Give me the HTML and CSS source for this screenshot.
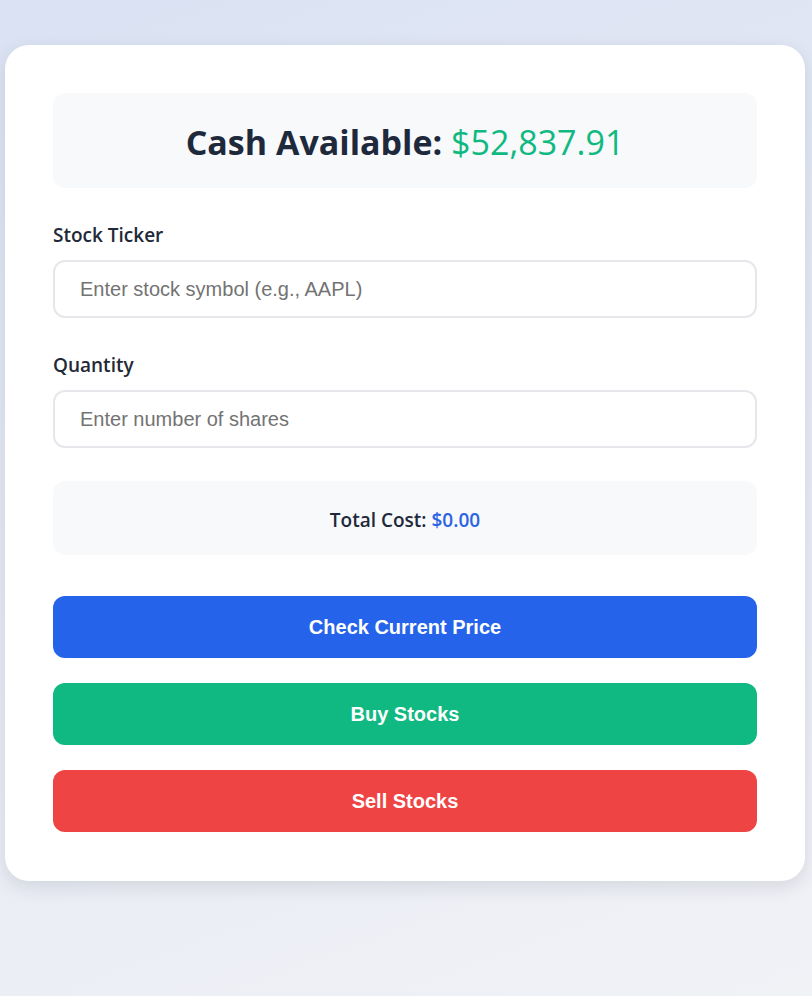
FILE: index.html
```html
<!DOCTYPE html>
<html>
<head>
<meta charset="utf-8">
<link rel="stylesheet" href="styles.css">
</head>
<body>
<div class="page">
  <div class="card">
    <div class="cash-box">
      <h2 class="cash-title">Cash Available: <span class="cash-amount">$52,837.91</span></h2>
    </div>
    <div class="field">
      <label class="label">Stock Ticker</label>
      <input class="input" type="text" placeholder="Enter stock symbol (e.g., AAPL)">
    </div>
    <div class="field">
      <label class="label">Quantity</label>
      <input class="input" type="text" placeholder="Enter number of shares">
    </div>
    <div class="total-box">Total Cost: <span class="total-amount">$0.00</span></div>
    <div class="actions">
      <button class="btn btn-blue">Check Current Price</button>
      <button class="btn btn-green">Buy Stocks</button>
      <button class="btn btn-red">Sell Stocks</button>
    </div>
  </div>
</div>
</body>
</html>
```
FILE: styles.css
```css
html, body {
  margin: 0;
  padding: 0;
}
body {
  font-family: "Open Sans", "Noto Sans", sans-serif;
  background: #fff;
}
.page {
  min-height: 996px;
  box-sizing: border-box;
  padding: 45px 7px 0 5px;
  background: linear-gradient(160deg, #dae2f3 0%, #e6eaf4 50%, #f1f2f6 100%);
}
.card {
  width: 800px;
  box-sizing: border-box;
  background: #fff;
  border-radius: 24px;
  padding: 48px 48px 49px;
  box-shadow: 0 6px 18px rgba(30, 41, 59, 0.12);
}
.cash-box {
  background: #f8f9fb;
  border-radius: 12px;
  height: 95px;
  display: flex;
  align-items: center;
  justify-content: center;
}
.cash-title {
  margin: 0;
  padding-top: 3px;
  font-size: 34px;
  font-weight: 700;
  color: #1e293b;
}
.cash-amount {
  font-weight: 400;
  color: #10b981;
}
.field {
  margin-top: 34px;
}
.field + .field {
  margin-top: 34px;
}
.label {
  display: block;
  font-size: 19px;
  font-weight: 600;
  color: #1f2937;
  line-height: 26px;
  margin-bottom: 12px;
}
.input {
  display: block;
  width: 100%;
  box-sizing: border-box;
  height: 58px;
  border: 2px solid #e5e7eb;
  border-radius: 12px;
  padding: 0 25px;
  font-family: "Liberation Sans", Arial, sans-serif;
  font-size: 20px;
  color: #1f2937;
  outline: none;
}
.input::placeholder {
  color: #737373;
}
.total-box {
  margin-top: 33px;
  background: #f8f9fb;
  border-radius: 12px;
  height: 74px;
  box-sizing: border-box;
  padding-top: 3px;
  display: flex;
  align-items: center;
  justify-content: center;
  font-size: 19px;
  font-weight: 600;
  color: #1e293b;
  white-space: pre;
}
.total-amount {
  color: #2b64e3;
}
.actions {
  margin-top: 41px;
  display: flex;
  flex-direction: column;
  gap: 25px;
}
.btn {
  height: 62px;
  border: none;
  border-radius: 12px;
  color: #fff;
  font-family: "Liberation Sans", Arial, sans-serif;
  font-size: 20px;
  font-weight: 700;
  cursor: pointer;
}
.btn-blue { background: #2563eb; }
.btn-green { background: #10b981; }
.btn-red { background: #ef4444; }
```
